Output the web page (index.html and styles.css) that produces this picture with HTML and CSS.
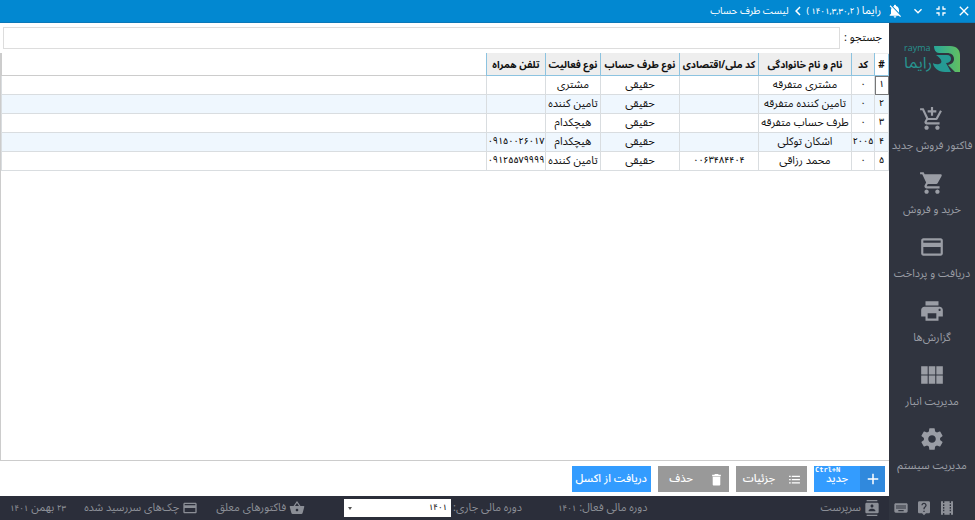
FILE: index.html
```html
<!DOCTYPE html>
<html lang="fa" dir="rtl">
<head>
<meta charset="utf-8">
<title>لیست طرف حساب</title>
<link rel="stylesheet" href="styles.css">
</head>
<body>
<header class="titlebar">
  <button class="tool" aria-label="بستن"><svg viewBox="0 0 24 24"><path d="M19 6.41 17.59 5 12 10.59 6.41 5 5 6.41 10.59 12 5 17.59 6.41 19 12 13.41 17.59 19 19 17.59 13.41 12z"/></svg></button>
  <button class="tool" aria-label="کوچک کردن"><svg viewBox="0 0 24 24"><path d="M5 16h3v3h2v-5H5v2zm3-8H5v2h5V5H8v3zm6 11h2v-3h3v-2h-5v5zm2-11V5h-2v5h5V8h-3z"/></svg></button>
  <button class="tool" aria-label="پنهان کردن"><svg viewBox="0 0 24 24"><path d="M7.41 8.59 12 13.17l4.59-4.58L18 10l-6 6-6-6z"/></svg></button>
  <button class="tool" aria-label="اعلان‌ها"><svg viewBox="0 0 24 24"><path d="M20 18.69 7.84 6.14 5.27 3.49 4 4.76l2.8 2.8v.01c-.52.99-.8 2.16-.8 3.42v5l-2 2v1h13.73l2 2L21 19.72l-1-1.03zM12 22c1.11 0 2-.89 2-2h-4c0 1.11.89 2 2 2zm6-7.32V11c0-3.08-1.64-5.64-4.5-6.32V4c0-.83-.67-1.5-1.5-1.5s-1.5.67-1.5 1.5v.68c-.15.03-.29.08-.42.12-.1.03-.2.07-.3.11h-.01c-.01 0-.01 0-.02.01-.23.09-.46.2-.68.31 0 0-.01 0-.01.01L18 14.68z"/></svg></button>
  <span class="app">رایما <span class="num">( ۱۴۰۱,۳,۳۰,۲ )</span></span>
  <svg class="crumb" viewBox="0 0 24 24"><path d="M15.41 7.41 14 6l-6 6 6 6 1.41-1.41L10.83 12z"/></svg>
  <span class="page">لیست طرف حساب</span>
</header>

<div class="body">
  <nav class="sidebar">
    <svg class="logo" viewBox="0 0 58 32" role="img" aria-label="رایما">
      <defs><linearGradient id="g" x1="0" x2="1"><stop offset="0" stop-color="#27a69a"/><stop offset="1" stop-color="#62bf61"/></linearGradient></defs>
      <path fill="url(#g)" d="M31 2h16c7 0 10 4 10 9v17h-5l-7-7c5-1 6-4 6-6 0-4-3-6-7-6h-8c-3 0-5-3-5-7z"/>
      <path fill="#259a94" d="M33 11h11c3 0 4 2 4 4s-2 4-5 4l5 9h-6c-7 0-12-5-12-9 0 0 3 2 6 1 4-1 3-5-3-9z"/>
      <text class="latin" x="1" y="7">rayma</text>
      <text class="persian" x="29" y="24">رایما</text>
    </svg>
    <a href="#"><svg viewBox="0 0 24 24"><path d="M11 9h2V6h3V4h-3V1h-2v3H8v2h3v3zm-4 9c-1.1 0-1.99.9-1.99 2S5.9 22 7 22s2-.9 2-2-.9-2-2-2zm10 0c-1.1 0-1.99.9-1.99 2s.89 2 1.99 2 2-.9 2-2-.9-2-2-2zm-9.83-3.25.03-.12.9-1.63h7.45c.75 0 1.41-.41 1.75-1.03l3.86-7.01L19.42 4h-.01l-1.1 2-2.76 5H8.53l-.13-.27L6.16 6l-.95-2-.94-2H1v2h2l3.6 7.59-1.35 2.45c-.16.28-.25.61-.25.96 0 1.1.9 2 2 2h12v-2H7.42c-.13 0-.25-.11-.25-.25z"/></svg>فاکتور فروش جدید</a>
    <a href="#"><svg viewBox="0 0 24 24"><path d="M7 18c-1.1 0-1.99.9-1.99 2S5.9 22 7 22s2-.9 2-2-.9-2-2-2zM1 2v2h2l3.6 7.59-1.35 2.45c-.16.28-.25.61-.25.96 0 1.1.9 2 2 2h12v-2H7.42c-.14 0-.25-.11-.25-.25l.03-.12.9-1.63h7.45c.75 0 1.41-.41 1.75-1.03l3.58-6.49c.08-.14.12-.31.12-.48 0-.55-.45-1-1-1H5.21l-.94-2H1zm16 16c-1.1 0-1.99.9-1.99 2s.89 2 1.99 2 2-.9 2-2-.9-2-2-2z"/></svg>خرید و فروش</a>
    <a href="#"><svg viewBox="0 0 24 24"><path d="M20 4H4c-1.11 0-1.99.89-1.99 2L2 18c0 1.11.89 2 2 2h16c1.11 0 2-.89 2-2V6c0-1.11-.89-2-2-2zm0 14H4v-6h16v6zm0-10H4V6h16v2z"/></svg>دریافت و پرداخت</a>
    <a href="#"><svg viewBox="0 0 24 24"><path d="M19 8H5c-1.66 0-3 1.34-3 3v6h4v4h12v-4h4v-6c0-1.66-1.34-3-3-3zm-3 11H8v-5h8v5zm3-7c-.55 0-1-.45-1-1s.45-1 1-1 1 .45 1 1-.45 1-1 1zm-1-9H6v4h12V3z"/></svg>گزارش‌ها</a>
    <a href="#"><svg viewBox="0 0 24 24"><path d="M2 4h6v7.500H2zM9 4h6v7.500H9zM16 4h6v7.500h-6zM2 12.500h6V20H2zM9 12.500h6V20H9zM16 12.500h6V20h-6z"/></svg>مدیریت انبار</a>
    <a href="#"><svg viewBox="0 0 24 24"><path d="M19.430 12.980c.04-.32.07-.64.07-.98s-.03-.66-.07-.98l2.110-1.650c.19-.15.24-.42.12-.64l-2-3.460c-.12-.22-.39-.3-.61-.22l-2.490 1c-.52-.4-1.080-.73-1.690-.98l-.38-2.650C14.460 2.180 14.250 2 14 2h-4c-.25 0-.46.18-.49.42l-.38 2.650c-.61.25-1.170.59-1.690.98l-2.490-1c-.23-.09-.49 0-.61.22l-2 3.460c-.13.22-.07.49.12.64l2.110 1.650c-.04.32-.07.65-.07.98s.03.66.07.98l-2.110 1.650c-.19.15-.24.42-.12.64l2 3.460c.12.22.39.3.61.22l2.490-1c.52.4 1.080.73 1.690.98l.38 2.650c.03.24.24.42.49.42h4c.25 0 .46-.18.49-.42l.38-2.650c.61-.25 1.170-.59 1.690-.98l2.490 1c.23.09.49 0 .61-.22l2-3.460c.12-.22.07-.49-.12-.64l-2.110-1.650zM12 15.500c-1.930 0-3.500-1.570-3.500-3.500s1.570-3.500 3.500-3.500 3.500 1.570 3.500 3.500-1.570 3.500-3.500 3.500z"/></svg>مدیریت سیستم</a>
  </nav>

  <main>
    <div class="search">
      <label for="q">جستجو :</label>
      <input id="q" type="text">
    </div>
    <div class="grid">
      <table>
        <colgroup><col class="c-idx"><col class="c-code"><col class="c-name"><col class="c-nat"><col class="c-type"><col class="c-act"><col class="c-tel"><col></colgroup>
        <thead>
          <tr><th>#</th><th>کد</th><th>نام و نام خانوادگی</th><th>کد ملی/اقتصادی</th><th>نوع طرف حساب</th><th>نوع فعالیت</th><th>تلفن همراه</th><th></th></tr>
        </thead>
        <tbody>
          <tr><td class="num current">۱</td><td class="num">۰</td><td>مشتری متفرقه</td><td></td><td>حقیقی</td><td>مشتری</td><td></td><td></td></tr>
          <tr><td class="num">۲</td><td class="num">۰</td><td>تامین کننده متفرقه</td><td></td><td>حقیقی</td><td>تامین کننده</td><td></td><td></td></tr>
          <tr><td class="num">۳</td><td class="num">۰</td><td>طرف حساب متفرقه</td><td></td><td>حقیقی</td><td>هیچکدام</td><td></td><td></td></tr>
          <tr><td class="num">۴</td><td class="num">۲۰۰۵</td><td>اشکان توکلی</td><td></td><td>حقیقی</td><td>هیچکدام</td><td class="num">۰۹۱۵۰۰۲۶۰۱۷</td><td></td></tr>
          <tr><td class="num">۵</td><td class="num">۰</td><td>محمد رزاقی</td><td class="num">۰۰۶۳۴۸۴۴۰۴</td><td>حقیقی</td><td>تامین کننده</td><td class="num">۰۹۱۲۵۵۷۹۹۹۹</td><td></td></tr>
        </tbody>
      </table>
    </div>
    <div class="actions">
      <button class="btn blue split"><span class="ico"><svg viewBox="0 0 24 24"><path d="M19 13h-6v6h-2v-6H5v-2h6V5h2v6h6z"/></svg></span><span class="text">جدید</span><kbd>Ctrl+N</kbd></button>
      <button class="btn split"><span class="ico small"><svg viewBox="0 0 24 24"><path d="M2 5h3v2.500H2zM2 11h3v2.500H2zM2 17h3v2.500H2zM7 5h15v2.500H7zM7 11h15v2.500H7zM7 17h15v2.500H7z"/></svg></span><span class="text">جزئیات</span></button>
      <button class="btn split"><span class="ico small"><svg viewBox="0 0 24 24"><path d="M5 21c0 1.100.9 2 2 2h10c1.100 0 2-.9 2-2V7H5v14zM20 3h-4l-1-1H9L8 3H4v3h16V3z"/></svg></span><span class="text">حذف</span></button>
      <button class="btn blue"><span class="text">دریافت از اکسل</span></button>
    </div>
  </main>
</div>

<footer class="status">
  <div class="shortcuts">
    <button class="tool" aria-label="فیلم آموزشی"><svg viewBox="0 0 24 24"><path d="M18 2v2.500h-2V2H8v2.500H6V2H3v20h3v-2.500h2V22h8v-2.500h2V22h3V2h-3zM8 17H6v-2.500h2V17zm0-4H6v-2.500h2V13zm0-4H6V6.500h2V9zm10 8h-2v-2.500h2V17zm0-4h-2v-2.500h2V13zm0-4h-2V6.500h2V9z"/></svg></button>
    <button class="tool" aria-label="راهنما"><svg viewBox="0 0 24 24"><path d="M19 2H5c-1.110 0-2 .9-2 2v14c0 1.100.89 2 2 2h4l3 3 3-3h4c1.100 0 2-.9 2-2V4c0-1.100-.9-2-2-2zm-6 16h-2v-2h2v2zm2.070-7.750-.9.920C13.450 11.900 13 12.500 13 14h-2v-.5c0-1.100.45-2.100 1.170-2.830l1.240-1.260c.37-.36.59-.86.59-1.410 0-1.100-.9-2-2-2s-2 .9-2 2H8c0-2.210 1.790-4 4-4s4 1.790 4 4c0 .88-.36 1.680-.93 2.250z"/></svg></button>
    <button class="tool" aria-label="صفحه کلید"><svg viewBox="0 0 24 24"><path d="M20 5H4c-1.100 0-1.990.9-1.990 2L2 17c0 1.100.9 2 2 2h16c1.100 0 2-.9 2-2V7c0-1.100-.9-2-2-2zm-9 3h2v2h-2V8zm0 3h2v2h-2v-2zM8 8h2v2H8V8zm0 3h2v2H8v-2zm-1 2H5v-2h2v2zm0-3H5V8h2v2zm9 7H8v-2h8v2zm0-4h-2v-2h2v2zm0-3h-2V8h2v2zm3 3h-2v-2h2v2zm0-3h-2V8h2v2z"/></svg></button>
  </div>
  <span class="item user"><svg viewBox="0 0 24 24"><path d="M20 0H4v2h16V0zM4 24h16v-2H4v2zM20 4H4c-1.100 0-2 .9-2 2v12c0 1.100.9 2 2 2h16c1.100 0 2-.9 2-2V6c0-1.100-.9-2-2-2zm-8 2.750c1.240 0 2.250 1.010 2.250 2.250s-1.010 2.250-2.250 2.250S9.750 10.240 9.750 9 10.760 6.750 12 6.750zM17 17H7v-1.500c0-1.670 3.330-2.500 5-2.500s5 .83 5 2.500V17z"/></svg>سرپرست</span>
  <span class="item"><span>دوره مالی فعال: <span class="num">۱۴۰۱</span></span></span>
  <span class="item period"><label for="period">دوره مالی جاری:</label>
    <span class="select"><select id="period" class="num"><option>۱۴۰۱</option></select></span></span>
  <a class="item" href="#"><svg viewBox="0 0 24 24"><path d="m17.210 9-4.380-6.560c-.19-.28-.51-.42-.83-.42s-.64.14-.83.430L6.790 9H2c-.55 0-1 .45-1 1 0 .09.01.18.04.27l2.540 9.270c.23.84 1 1.460 1.920 1.460h13c.92 0 1.690-.62 1.930-1.460l2.540-9.270L23 10c0-.55-.45-1-1-1h-4.790zM9 9l3-4.400L15 9H9zm3 8c-1.100 0-2-.9-2-2s.9-2 2-2 2 .9 2 2-.9 2-2 2z"/></svg>فاکتورهای معلق</a>
  <a class="item" href="#"><svg viewBox="0 0 24 24"><path d="M20 4H4c-1.110 0-1.990.89-1.990 2L2 18c0 1.110.89 2 2 2h16c1.110 0 2-.89 2-2V6c0-1.110-.89-2-2-2zm0 14H4v-6h16v6zm0-10H4V6h16v2z"/></svg>چک‌های سررسید شده</a>
  <span class="item"><span><span class="num">۲۳</span> بهمن <span class="num">۱۴۰۱</span></span></span>
</footer>
</body>
</html>
```
FILE: styles.css
```css
* { box-sizing: border-box; }
body {
  margin: 0;
  min-height: 100vh;
  display: flex;
  flex-direction: column;
  background: #fff;
  color: #111;
  font: 11px/18px "Noto Sans Arabic", "Noto Sans", "DejaVu Sans", sans-serif;
}
svg { fill: currentColor; flex: none; }
button, input, select { font: inherit; color: inherit; }
a { color: inherit; text-decoration: none; }
.num { font-size: 9px; font-weight: 500; }

.titlebar {
  display: flex;
  align-items: center;
  height: 23px;
  background: #0288d1;
  border-bottom: 1px solid #0b78b8;
  color: #fff;
}
.tool {
  display: flex;
  padding: 0;
  border: 0;
  background: none;
}
.titlebar .tool { width: 23px; justify-content: center; }
.titlebar .tool svg { width: 16px; height: 16px; }
.titlebar span { line-height: 22px; }
.app { padding-right: 2px; }
.titlebar .num { font-size: 8px; }
.page { font-size: 10px; }
.crumb { width: 18px; height: 18px; }

.body { flex: 1; display: flex; }
.sidebar {
  flex: none;
  width: 86px;
  display: flex;
  flex-direction: column;
  align-items: center;
  background: #30343f;
  color: #9a9da5;
}
.logo { width: 58px; height: 32px; margin: 21px 0 30px; overflow: visible; }
.logo text { fill: #27938f; }
.logo .latin { font: 9px "Open Sans", sans-serif; direction: ltr; }
.logo .persian { font-size: 16px; }
.sidebar a {
  display: flex;
  flex-direction: column;
  align-items: center;
  gap: 5px;
  height: 64px;
  white-space: nowrap;
}
.sidebar a svg { width: 26px; height: 26px; }

main { flex: 1; min-width: 0; display: flex; flex-direction: column; }
.search {
  display: flex;
  align-items: center;
  gap: 4px;
  padding: 4px 7px 4px 3px;
}
.search input {
  flex: 1;
  height: 22px;
  border: 1px solid #ddd;
  outline: 0;
}
.grid { flex: 1; border-bottom: 1px solid #ccc; border-left: 1px solid #ccc; }
table { width: 100%; table-layout: fixed; border-collapse: collapse; }
th, td {
  height: 19px;
  padding: 0;
  line-height: 16px;
  text-align: center;
  white-space: nowrap;
  border: 1px solid #d9dde0;
}
th {
  height: 22px;
  background: #eee;
  border: 1px solid #8cc3e0;
  border-top-color: #eee;
  font-size: 10px;
}
th:first-child { background: #fff; }
th:last-child { background: #fff; border-color: #fff #8cc3e0 #ccc #ccc; }
tbody tr:nth-child(even) td { background: #eff7fe; }
td.current { outline: 1px solid #777; outline-offset: -1px; }
.c-idx { width: 14px; }
.c-code { width: 23px; }
.c-name { width: 93px; }
.c-nat { width: 79px; }
.c-type { width: 79px; }
.c-act { width: 55px; }
.c-tel { width: 59px; }

.actions { display: flex; gap: 7px; padding: 5px 4px 4px; }
.btn {
  position: relative;
  display: flex;
  align-items: center;
  height: 26px;
  padding: 0 4px;
  border: 0;
  background: #999;
  color: #fff;
  font-weight: 500;
}
.btn.blue { background: #339cff; }
.btn.split { width: 71px; padding: 0; }
.split .text { flex: 1; text-align: center; }
.ico {
  display: flex;
  align-items: center;
  justify-content: center;
  width: 25px;
  height: 26px;
}
.blue .ico { background: #3089dd; }
.ico svg { width: 18px; height: 18px; }
.ico.small svg { width: 13px; height: 13px; }
kbd {
  position: absolute;
  top: 0;
  left: 1px;
  font: bold 7px/9px "DejaVu Sans Mono", monospace;
}

.status {
  display: flex;
  align-items: center;
  height: 24px;
  padding-left: 10px;
  background: #2b2e3a;
  color: #8b8e96;
}
.shortcuts {
  width: 86px;
  height: 24px;
  display: flex;
  align-items: center;
  padding-right: 20px;
  gap: 7px;
  background: #30343f;
}
.shortcuts svg, .item svg { width: 16px; height: 16px; }
.item { display: flex; align-items: center; gap: 3px; margin-right: 18px; white-space: nowrap; }
.item .num { font-size: 8px; }
.item.user { margin-right: 9px; margin-left: auto; }
.item.period { margin-right: 36px; margin-left: 21px; gap: 2px; }
.select { position: relative; display: flex; }
.select::after {
  content: "";
  position: absolute;
  left: 4px;
  top: 8px;
  border: 2px solid transparent;
  border-top: 3px solid #555;
  border-bottom: 0;
}
select {
  appearance: none;
  width: 107px;
  height: 18px;
  padding: 0 4px;
  border: 0;
  border-radius: 0;
  background: #fff;
  color: #222;
}
```
